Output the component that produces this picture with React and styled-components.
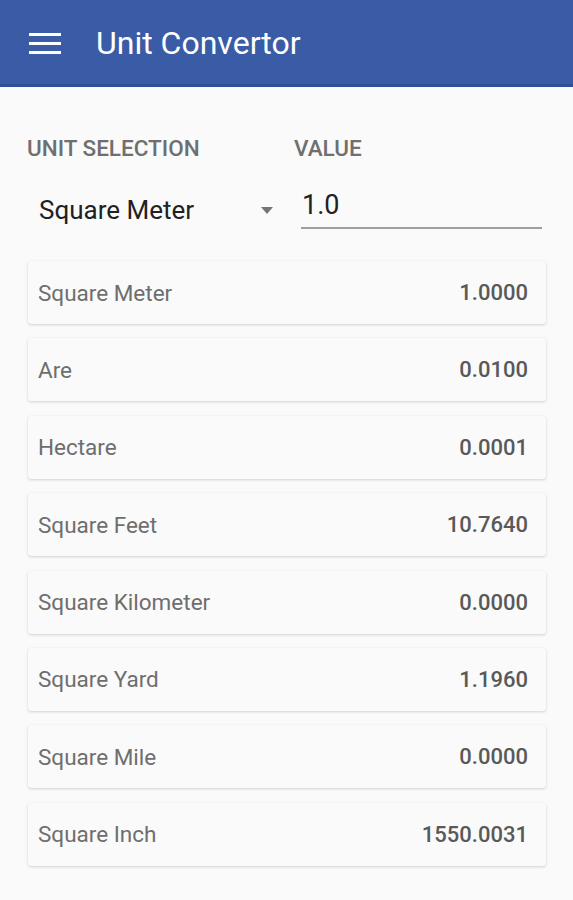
import React, { useState } from 'react'
import styled, { createGlobalStyle } from 'styled-components'

const units = [
    { name: 'Square Meter', value: '1.0000' },
    { name: 'Are', value: '0.0100' },
    { name: 'Hectare', value: '0.0001' },
    { name: 'Square Feet', value: '10.7640' },
    { name: 'Square Kilometer', value: '0.0000' },
    { name: 'Square Yard', value: '1.1960' },
    { name: 'Square Mile', value: '0.0000' },
    { name: 'Square Inch', value: '1550.0031' },
]

function App()
{
    const [value, setValue] = useState('1.0')

    return (
        <Page>
            <GlobalStyle />
            <Header>
                <Menu>
                    <span />
                    <span />
                    <span />
                </Menu>
                <Title>Unit Convertor</Title>
            </Header>

            <Content>
                <Selection>
                    <Field>
                        <Caption>Unit Selection</Caption>
                        <Dropdown>
                            <span>Square Meter</span>
                            <Caret />
                        </Dropdown>
                    </Field>
                    <Field>
                        <Caption>Value</Caption>
                        <ValueInput value={value} onChange={(e) => setValue(e.target.value)} />
                    </Field>
                </Selection>

                <List>
                    {units.map(unit => (
                        <Card key={unit.name}>
                            <UnitName>{unit.name}</UnitName>
                            <UnitValue>{unit.value}</UnitValue>
                        </Card>
                    ))}
                </List>
            </Content>
        </Page>
    )
}

export default App

const GlobalStyle = createGlobalStyle`
    body {
        margin: 0;
        background: #fafafa;
        font-family: Roboto, "Liberation Sans", sans-serif;
    }
`

const Page = styled.div`
    width: 573px;
    min-height: 900px;
    background: #fafafa;
`

const Header = styled.div`
    height: 84px;
    border-bottom: 3px solid #2f4f97;
    background: #3a5ba5;
    display: flex;
    align-items: center;
    padding-left: 29px;
`

const Menu = styled.div`
    width: 32px;
    display: flex;
    flex-direction: column;
    gap: 6px;
    margin-top: 2px;

    & > span {
        display: block;
        height: 3px;
        background: #ffffff;
    }
`

const Title = styled.div`
    margin-left: 35px;
    color: #ffffff;
    font-size: 32px;
    margin-top: 2px;
`

const Content = styled.div`
    padding: 0 27px 0 28px;
`

const Selection = styled.div`
    display: flex;
    padding-top: 46px;
    margin-bottom: 27px;
`

const Field = styled.div`
    display: flex;
    flex-direction: column;

    &:first-child {
        width: 267px;
        flex-shrink: 0;
    }

    &:last-child {
        flex: 1;
        min-width: 0;
    }
`

const Caption = styled.div`
    text-transform: uppercase;
    font-size: 22.5px;
    font-weight: 500;
    color: #6f6f6f;
    line-height: 30px;
    margin-left: -1px;
`

const Dropdown = styled.div`
    display: flex;
    align-items: center;
    justify-content: space-between;
    height: 48px;
    margin-top: 23px;
    padding-left: 11px;
    padding-right: 22px;
    font-size: 26px;
    color: #212121;
`

const Caret = styled.div`
    width: 0;
    height: 0;
    border-left: 6.5px solid transparent;
    border-right: 6.5px solid transparent;
    border-top: 7px solid #757575;
`

const ValueInput = styled.input`
    margin-top: 20px;
    margin-left: 6px;
    margin-right: 4px;
    width: auto;
    height: 44px;
    border: none;
    border-bottom: 2px solid #9e9e9e;
    outline: none;
    background: none;
    font-family: Roboto, "Liberation Sans", sans-serif;
    font-size: 27px;
    color: #212121;
    padding: 0 0 0 1px;
`

const List = styled.div`
    display: flex;
    flex-direction: column;
    gap: 14.4px;
`

const Card = styled.div`
    height: 63px;
    display: flex;
    align-items: center;
    justify-content: space-between;
    padding: 0 18px 0 10px;
    background: #fafafa;
    border-radius: 3px;
    box-shadow: 0 1px 3px rgba(0, 0, 0, 0.16), 0 0 1px rgba(0, 0, 0, 0.06);
`

const UnitName = styled.div`
    font-size: 22.5px;
    color: #6e6e6e;
`

const UnitValue = styled.div`
    font-size: 22px;
    font-weight: 500;
    color: #595959;
`
